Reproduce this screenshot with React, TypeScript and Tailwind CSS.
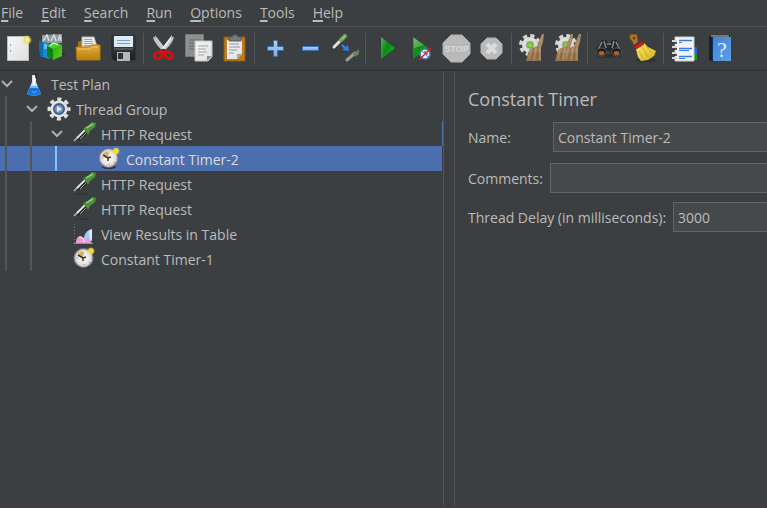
import { Fragment, type ReactNode } from "react";

const Icon = ({ children, size = 29 }: { children: ReactNode; size?: number }) => (
  <svg width={size} height={size} viewBox={`0 0 ${size} ${size}`} aria-hidden="true" className="shrink-0">
    {children}
  </svg>
);

const Gradients = () => (
  <svg width="0" height="0" className="absolute" aria-hidden="true">
    <defs>
      <linearGradient id="paper" x1="0" y1="0" x2="1" y2="1">
        <stop offset="0" stopColor="#f6f6f6" />
        <stop offset="1" stopColor="#dedede" />
      </linearGradient>
      <linearGradient id="gold" x1="0" y1="0" x2="0" y2="1">
        <stop offset="0" stopColor="#e6b03a" />
        <stop offset="1" stopColor="#b97c0c" />
      </linearGradient>
      <linearGradient id="green" x1="0" y1="0" x2="1" y2="1">
        <stop offset="0" stopColor="#4fae4f" />
        <stop offset="0.45" stopColor="#0b8a12" />
        <stop offset="1" stopColor="#12c912" />
      </linearGradient>
      <linearGradient id="lime" x1="0" y1="0" x2="1" y2="1">
        <stop offset="0" stopColor="#2fa80c" />
        <stop offset="1" stopColor="#57d81c" />
      </linearGradient>
      <linearGradient id="sky" x1="0" y1="0" x2="0" y2="1">
        <stop offset="0" stopColor="#b5d3f2" />
        <stop offset="1" stopColor="#7aaade" />
      </linearGradient>
      <linearGradient id="book" x1="0" y1="0" x2="1" y2="1">
        <stop offset="0" stopColor="#3f82d4" />
        <stop offset="1" stopColor="#5f9fe8" />
      </linearGradient>
      <linearGradient id="steel" x1="0" y1="0" x2="0" y2="1">
        <stop offset="0" stopColor="#47484c" />
        <stop offset="1" stopColor="#1e1f22" />
      </linearGradient>
      <linearGradient id="straw" x1="0" y1="0" x2="1" y2="1">
        <stop offset="0" stopColor="#fff173" />
        <stop offset="1" stopColor="#d2ab14" />
      </linearGradient>
      <radialGradient id="dial">
        <stop offset="0" stopColor="#ffffff" />
        <stop offset="1" stopColor="#dcdad4" />
      </radialGradient>
      <radialGradient id="glow">
        <stop offset="0" stopColor="#fffbd0" />
        <stop offset="0.5" stopColor="#eee05a" />
        <stop offset="1" stopColor="#f4e63c" stopOpacity="0" />
      </radialGradient>
      <radialGradient id="pea">
        <stop offset="0" stopColor="#a5e05a" />
        <stop offset="1" stopColor="#5aa71c" />
      </radialGradient>
    </defs>
  </svg>
);

const NewFile = () => (
  <Icon>
    <path d="M3.500 2.500h21v24h-21z" fill="url(#paper)" stroke="#bdbdbd" />
    <path d="M6 11h1M6 17h1" stroke="#8a8a8a" strokeWidth="1.500" />
    <circle cx="23" cy="6" r="5" fill="url(#glow)" />
  </Icon>
);

const Templates = () => (
  <Icon>
    <path d="M3 1l20-1v9H3z" fill="#8f9a9f" />
    <path d="M4 7l4-6 2 6M12 7l3-6 2 6M19 7l2-6 1 6" stroke="#d5dadb" strokeWidth="1.500" fill="none" />
    <path d="M0 7l10 2v16L1 22z" fill="#188ad0" />
    <path d="M0 7l4 1v15l-3-1z" fill="#0d6cae" />
    <path d="M5 10h3v5H5z" fill="#6db9e4" />
    <path d="M8 12l6 3v11l-6-4z" fill="#0d8214" />
    <path d="M14 14l9-3v11l-9 4z" fill="url(#lime)" />
    <path d="M8 12l7-4 8 3-9 4z" fill="#45cf28" />
    <path d="M11 12q3-5 8-1" stroke="#c5eebb" strokeWidth="1.500" fill="none" />
    <path d="M23 21l3-2" stroke="#2b2e2f" strokeWidth="2" />
  </Icon>
);

const OpenFile = () => (
  <Icon>
    <path d="M4 8l2-1h5v3h12l2 2v14H4z" fill="#a96f0d" />
    <path d="M8 3h12l3 10H8z" fill="#eeeeee" stroke="#b9b9b9" />
    <path d="M10 5.500h8M10 7.500h9M10 9.500h9M10 11.500h10" stroke="#a1a1a1" />
    <path d="M2 13h13l3-2h8v15H3z" fill="url(#gold)" stroke="#b27b15" />
    <path d="M4 15h12l2-2h6" stroke="#f0c566" fill="none" />
  </Icon>
);

const SaveFile = () => (
  <Icon>
    <path d="M3 2h23v24H5l-2-2z" fill="url(#steel)" stroke="#232427" />
    <path d="M5 2h19v11H5z" fill="#dce9f7" />
    <path d="M8 6.500h13M8 9.500h13" stroke="#7ba0cc" />
    <path d="M8 18h13v9H8z" fill="#b5b6b7" />
    <path d="M9 19h5v6H9z" fill="#303236" />
    <path d="M5 15h19" stroke="#71747a" />
  </Icon>
);

const Cut = () => (
  <Icon>
    <path d="M5 1q0 5 3 9l5 7 2-3z" fill="#c9cccd" />
    <path d="M22 1q0 5-3 9l-5 7-2-3z" fill="#eceeee" />
    <path d="M4 3q1 5 8 12M23 3q-1 5-8 12" stroke="#c1c4c4" strokeWidth="2" fill="none" />
    <path d="M10 17l2-2h3l2 2-2 4-1.500-2-1.500 2z" fill="#d01818" />
    <ellipse cx="8.500" cy="21.500" rx="4" ry="3" fill="none" stroke="#d41111" strokeWidth="3" transform="rotate(-25 8 22)" />
    <ellipse cx="18.500" cy="21.500" rx="4" ry="3" fill="none" stroke="#d41111" strokeWidth="3" transform="rotate(25 19 22)" />
    <circle cx="13.500" cy="16" r="1" fill="#770909" />
  </Icon>
);

const Copy = () => (
  <Icon>
    <path d="M.500.500h18v22h-18z" fill="#8d908f" stroke="#777a79" />
    <path d="M4 6h12M4 9h8M4 12h8M4 15h6" stroke="#676969" />
    <path d="M10 7h17v16l-4 4H10z" fill="url(#paper)" stroke="#c3c3c3" />
    <path d="M13 12h10M13 15h8M13 18h9M13 21h6" stroke="#a5a5a5" />
    <path d="M27 22h-5v5z" fill="#909090" />
  </Icon>
);

const Paste = () => (
  <Icon>
    <path d="M4 3h21v24H4z" fill="#bd7d1d" stroke="#8f5a10" />
    <path d="M7 6h15v14l-5 5H7z" fill="url(#paper)" />
    <path d="M9 3h3l1-2h4l1 2h3v4H9z" fill="#797c79" stroke="#565956" />
    <path d="M9 10h10M9 13h11M9 16h8M9 19h5" stroke="#939696" />
    <path d="M22 20h-5v5z" fill="#a5a8a8" />
  </Icon>
);

const Plus = () => (
  <Icon>
    <path d="M12.500 6.500h4v6h6v4h-6v6h-4v-6h-6v-4h6z" fill="url(#sky)" stroke="#3a6eae" />
  </Icon>
);

const Minus = () => (
  <Icon>
    <path d="M6.500 12.500h16v4h-16z" fill="url(#sky)" stroke="#3a6eae" />
  </Icon>
);

const Toggle = () => (
  <Icon>
    <path d="M3 13l7-7" stroke="#dfe2df" strokeWidth="3" strokeLinecap="round" />
    <path d="M10 6l4-4" stroke="#74a85e" strokeWidth="4" strokeLinecap="round" />
    <path d="M11 5l3-3" stroke="#b0d79c" />
    <path d="M11 11l5 5" stroke="#3e86e8" strokeWidth="2" />
    <path d="M18 17l-7-1 6-5z" fill="#2f7bea" />
    <path d="M16 26l8-7" stroke="#989d98" strokeWidth="3" strokeLinecap="round" />
    <path d="M22 20l6-5v5l-4 3z" fill="#66845a" />
  </Icon>
);

const Play = () => (
  <Icon>
    <path d="M9 3l14 11L9 25z" fill="url(#green)" />
    <path d="M10 5v18" stroke="#4fc14f" opacity="0.6" />
  </Icon>
);

const PlayNoTimers = () => (
  <Icon>
    <path d="M6 3l15 11L6 25z" fill="url(#green)" />
    <path d="M7 4l10 7-10 3z" fill="#8cc78c" opacity="0.5" />
    <circle cx="18" cy="20" r="5" fill="#e9eff9" stroke="#4b79b2" strokeWidth="1.500" />
    <path d="M18 17v3h3" stroke="#3f75bd" strokeWidth="1.500" fill="none" />
    <path d="M12 26L24 14" stroke="#d82424" strokeWidth="1.500" />
    <path d="M14 16l8 8" stroke="#5182bb" />
  </Icon>
);

const Stop = () => (
  <Icon>
    <path d="M9 1h11l8 8v11l-8 8H9l-8-8V9z" fill="#b9b9b9" stroke="#b0b0b0" />
    <text x="14.500" y="18" textAnchor="middle" fontSize="9" fontWeight="700" fill="#d8d8d8" fontFamily="'Liberation Sans', sans-serif">
      STOP
    </text>
    <path d="M3 10.500h23M3 19.500h23" stroke="#aeaeae" strokeWidth="0.500" />
  </Icon>
);

const Shutdown = () => (
  <Icon>
    <path d="M10 4h9l6 6v9l-6 6h-9l-6-6v-9z" fill="#bababa" stroke="#b0b0b0" />
    <path d="M10 10l9 9M19 10l-9 9" stroke="#dddddd" strokeWidth="4" />
  </Icon>
);

const Cog = ({ x = 0 }: { x?: number }) => (
  <g transform={`translate(${x} 0)`}>
    <circle cx="12" cy="11" r="8" fill="#dcdddd" />
    <circle cx="12" cy="11" r="9" fill="none" stroke="#d4d5d5" strokeWidth="4" strokeDasharray="4 3.068" />
    <circle cx="12" cy="11" r="4" fill="url(#pea)" stroke="#babdba" />
  </g>
);

const Brush = ({ x = 0 }: { x?: number }) => (
  <g transform={`translate(${x} 0)`}>
    <path d="M25 0h2l-1 8-2 6v13H9q2-4 2-8 1-4 4-5l5-2z" fill="#a98b64" />
    <path d="M11 19q6-1 13-1v9H9q2-4 2-8z" fill="#96754e" />
    <path d="M17 14l-3 12M21 13l-1 14" stroke="#7d6042" strokeWidth="0.700" />
    <path d="M14 17l-2 8M19 14l-2 12M23 14v12" stroke="#c5a478" strokeWidth="0.700" />
  </g>
);

const Clear = () => (
  <Icon>
    <Cog />
    <Brush x={-1} />
  </Icon>
);

const ClearAll = () => (
  <Icon>
    <Cog x={1} />
    <Brush x={-7} />
    <Brush x={1} />
    <path d="M19.500 7v5" stroke="#dedede" />
  </Icon>
);

const Binoculars = () => (
  <Icon>
    <ellipse cx="15" cy="22" rx="13" ry="2" fill="#2f3132" />
    <path d="M8 6h4l2 3h2l2-3h4l5 9-1 7h-9l-1-5h-3l-1 5H3l-1-7z" fill="#252628" />
    <path d="M10 7l2 7M20 7l-2 7M8 8l-4 8M22 8l4 8M13 10h4" stroke="#85898c" fill="none" strokeWidth="1.500" />
    <ellipse cx="7.500" cy="18" rx="5" ry="4" fill="#1b1b1c" stroke="#5c5d60" />
    <ellipse cx="22.500" cy="18" rx="5" ry="4" fill="#1b1b1c" stroke="#5c5d60" />
    <ellipse cx="7.500" cy="19" rx="3" ry="2" fill="#b0602e" />
    <ellipse cx="22.500" cy="19" rx="3" ry="2" fill="#b0602e" />
  </Icon>
);

const Broom = () => (
  <Icon>
    <ellipse cx="17" cy="26" rx="11" ry="2" fill="#303233" />
    <path d="M1 1q4-2 7 0l1 7-4 3-2-4q-3-2-2-6z" fill="#b07a32" stroke="#795019" />
    <circle cx="5" cy="4" r="1.500" fill="#59401d" />
    <path d="M7 15l8-6 4 4 8 4-2 5-6 4-7 1-3-4z" fill="url(#straw)" />
    <path d="M10 17l4 8M14 14l5 9M17 12l6 7" stroke="#bf9a17" strokeWidth="0.700" fill="none" />
    <path d="M5 13l8-6 2 3-8 5z" fill="#d52017" stroke="#a71610" />
  </Icon>
);

const FunctionHelper = () => (
  <Icon>
    <path d="M22 13h5v6h-5z" fill="#2265d8" />
    <path d="M22 19h5v7h-5z" fill="#159823" />
    <path d="M5 3h19v24H5z" fill="#f3f4f5" stroke="#cccccc" />
    <path d="M9 6.500h13M9 14.500h13M9 22.500h13" stroke="#347ce5" strokeWidth="1.500" />
    <path d="M9 8.500h3M9 16.500h10M9 24.500h6" stroke="#347ce5" />
    <path d="M2 7h5M2 13h5M2 19h5M2 24h5" stroke="#d8d8d8" strokeWidth="2" />
    <path d="M4 9h3M4 15h3M4 21h3" stroke="#242424" strokeWidth="1.500" />
  </Icon>
);

const HelpBook = () => (
  <Icon>
    <path d="M4 3l3-2h18v26H7l-3-1z" fill="#1c2026" />
    <path d="M8 3h18v24H8z" fill="url(#book)" />
    <path d="M6 2h18" stroke="#c9ced4" />
    <path d="M7.500 4v22" stroke="#0e3569" />
    <text x="17" y="23" textAnchor="middle" fontSize="22" fill="#e0ecfb" fontFamily="'Liberation Serif', serif">
      ?
    </text>
  </Icon>
);

const Flask = () => (
  <Icon size={24}>
    <path d="M10 3h4v7l5 12q-7 3-14 0l5-12z" fill="#d3dfe8" />
    <path d="M8 15h8l3 7q-7 3-14 0z" fill="#1676dc" />
    <path d="M8 15h8" stroke="#6db8f6" strokeWidth="2" />
    <path d="M12 4v9" stroke="#ffffff" strokeWidth="2" />
    <path d="M14 1v5" stroke="#222426" strokeWidth="1.500" />
    <path d="M10 19l2 2 3-2" stroke="#5eb0f5" fill="none" />
  </Icon>
);

const Gear = () => (
  <Icon size={24}>
    <circle cx="12" cy="12" r="8.500" fill="#e4e4e4" />
    <circle cx="12" cy="12" r="9.500" fill="none" stroke="#dedfdf" strokeWidth="4" strokeDasharray="4 3.461" strokeDashoffset="2" />
    <circle cx="12" cy="12" r="5" fill="#7897c1" stroke="#3b5c8d" strokeWidth="2" />
    <path d="M10 9l5 3-5 3z" fill="#e4edf8" />
  </Icon>
);

const Dropper = () => (
  <Icon size={24}>
    <path d="M2 22h14" stroke="#2d3031" />
    <path d="M1 20l3-5 8-8 4 4-9 7z" fill="#222523" />
    <path d="M2 19l4-4" stroke="#9fa3a0" strokeWidth="2" />
    <path d="M5 16l8-8" stroke="#e2e4e1" strokeWidth="2" />
    <path d="M8 17l6-6" stroke="#a3a7a3" />
    <path d="M11 6l4-1 5-5 4 1-1 4-5 4-2 4z" fill="#4a9139" />
    <path d="M14 6l7-4" stroke="#8fc878" strokeWidth="2" />
  </Icon>
);

const Timer = () => (
  <Icon size={24}>
    <ellipse cx="12" cy="20" rx="7" ry="2" fill="#383448" />
    <circle cx="11.500" cy="11" r="10" fill="#777390" />
    <circle cx="11.500" cy="11" r="8.500" fill="url(#dial)" stroke="#c5bda5" />
    <path d="M11 11L6 7q4-5 6-1z" fill="#d6b45c" />
    <path d="M6 8l5 3v3M11 11l3-1" stroke="#363329" strokeWidth="1.500" fill="none" />
    <path d="M12 17v1M5 11h1M17 15l1 1" stroke="#8c8475" />
    <circle cx="19" cy="4" r="4" fill="url(#glow)" />
    <circle cx="19" cy="4" r="2.500" fill="#ecdf28" />
  </Icon>
);

const Chart = () => (
  <Icon size={24}>
    <path d="M2.500 2v19" stroke="#737779" strokeDasharray="1 2" />
    <path d="M2 21.500h19" stroke="#8c9092" />
    <path d="M12 15q2-7 8-8v12h-8z" fill="#9ccdf0" />
    <path d="M17 9l3-2v10l-2 1z" fill="#dceefb" />
    <path d="M4 21q0-7 5-7l4 3 3-1 4 5z" fill="#ee9ed4" />
    <path d="M7 15l4 1 1 4" stroke="#fbdcf1" fill="none" />
  </Icon>
);

const menus = ["File", "Edit", "Search", "Run", "Options", "Tools", "Help"];

type Tool = { label: string; icon: () => ReactNode; disabled?: boolean };

const toolGroups: Tool[][] = [
  [
    { label: "New", icon: NewFile },
    { label: "Templates", icon: Templates },
    { label: "Open", icon: OpenFile },
    { label: "Save", icon: SaveFile },
  ],
  [
    { label: "Cut", icon: Cut },
    { label: "Copy", icon: Copy },
    { label: "Paste", icon: Paste },
  ],
  [
    { label: "Expand All", icon: Plus },
    { label: "Collapse All", icon: Minus },
    { label: "Toggle", icon: Toggle },
  ],
  [
    { label: "Start", icon: Play },
    { label: "Start no pauses", icon: PlayNoTimers },
    { label: "Stop", icon: Stop, disabled: true },
    { label: "Shutdown", icon: Shutdown, disabled: true },
  ],
  [
    { label: "Clear", icon: Clear },
    { label: "Clear All", icon: ClearAll },
  ],
  [
    { label: "Search", icon: Binoculars },
    { label: "Reset Search", icon: Broom },
  ],
  [
    { label: "Function Helper", icon: FunctionHelper },
    { label: "Help", icon: HelpBook },
  ],
];

type Node = { label: string; depth: number; icon: () => ReactNode; open?: boolean; selected?: boolean };

const nodes: Node[] = [
  { label: "Test Plan", depth: 0, icon: Flask, open: true },
  { label: "Thread Group", depth: 1, icon: Gear, open: true },
  { label: "HTTP Request", depth: 2, icon: Dropper, open: true },
  { label: "Constant Timer-2", depth: 3, icon: Timer, selected: true },
  { label: "HTTP Request", depth: 2, icon: Dropper },
  { label: "HTTP Request", depth: 2, icon: Dropper },
  { label: "View Results in Table", depth: 2, icon: Chart },
  { label: "Constant Timer-1", depth: 2, icon: Timer },
];

const TreeRow = ({ node }: { node: Node }) => {
  const RowIcon = node.icon;
  return (
    <li
      role="treeitem"
      aria-level={node.depth + 1}
      aria-selected={!!node.selected}
      aria-expanded={node.open}
      className={`flex h-[25px] items-stretch ${node.selected ? "mr-px bg-[#4b6eaf] text-[#dddddd]" : ""} ${
        node.open && node.depth === 2 ? "border-r border-[#4b6eaf]" : ""
      }`}
    >
      {Array.from({ length: node.depth }, (_, level) => (
        <span key={level} className="flex w-[25px] shrink-0 pl-[5px]">
          <span className={`w-0.5 ${level === 2 ? "bg-[#7fc4ff]" : "bg-[#555555]"}`} />
        </span>
      ))}
      <span className="flex w-[22px] shrink-0 items-center">
        {node.open && (
          <svg width="13" height="10" viewBox="0 0 13 10" aria-hidden="true">
            <path d="M2 2l5 5 5-5" fill="none" stroke="#adadad" strokeWidth="2" />
          </svg>
        )}
      </span>
      <span className="flex items-center gap-[5px] whitespace-nowrap">
        <RowIcon />
        <span className="pt-0.5">{node.label}</span>
      </span>
    </li>
  );
};

const field =
  "h-[30px] min-w-0 flex-1 border border-r-0 border-[#646464] bg-[#45494a] px-1 text-[#bbbbbb] outline-none";

export default function App() {
  return (
    <div className="flex min-h-screen flex-col overflow-hidden border-b-2 border-[#433c40] bg-[#3c3f41] font-['Open_Sans','Noto_Sans',sans-serif] text-sm text-[#bbbbbb]">
      <Gradients />
      <nav aria-label="Main menu" className="flex h-[27px] items-start gap-[18px] border-b border-[#515151] pl-px">
        {menus.map((menu) => (
          <button key={menu} type="button" className="leading-[25px]">
            <span className="underline decoration-2 underline-offset-2">{menu[0]}</span>
            {menu.slice(1)}
          </button>
        ))}
      </nav>
      <div role="toolbar" aria-label="Tools" className="flex h-11 items-start border-b-2 border-[#323537] pt-[7px] pl-px">
        {toolGroups.map((group, index) => (
          <Fragment key={index}>
            {index > 0 && (
              <span className="flex w-1.5 shrink-0 pl-0.5">
                <span className="-mt-px h-[31px] w-px bg-[#555555]" />
              </span>
            )}
            {group.map(({ label, icon: ToolIcon, disabled }) => (
              <button key={label} type="button" aria-label={label} disabled={disabled} className="flex w-[35px] shrink-0 justify-center">
                <ToolIcon />
              </button>
            ))}
          </Fragment>
        ))}
      </div>
      <main className="flex flex-1">
        <section aria-label="Test plan tree" className="w-[58%] max-w-[444px] shrink-0 border-r border-[#555555]">
          <ul role="tree">
            {nodes.map((node, index) => (
              <TreeRow key={index} node={node} />
            ))}
          </ul>
        </section>
        <section aria-labelledby="panel-title" className="ml-2.5 min-w-0 flex-1 border-l border-[#555555] pt-3.5 pl-[13px]">
          <h1 id="panel-title" className="text-lg leading-7">
            Constant Timer
          </h1>
          <form>
            <div className="mt-[9px] flex items-center">
              <label htmlFor="name" className="w-[85px] shrink-0 pt-0.5">
                Name:
              </label>
              <input id="name" type="text" defaultValue="Constant Timer-2" className={field} />
            </div>
            <div className="mt-[11px] flex items-center">
              <label htmlFor="comments" className="w-[82px] shrink-0 pt-0.5">
                Comments:
              </label>
              <input id="comments" type="text" className={field} />
            </div>
            <div className="mt-[9px] flex items-center">
              <label htmlFor="delay" className="w-[205px] shrink-0 pt-0.5 whitespace-nowrap">
                Thread Delay (in milliseconds):
              </label>
              <input id="delay" type="text" defaultValue="3000" className={field} />
            </div>
          </form>
        </section>
      </main>
    </div>
  );
}
